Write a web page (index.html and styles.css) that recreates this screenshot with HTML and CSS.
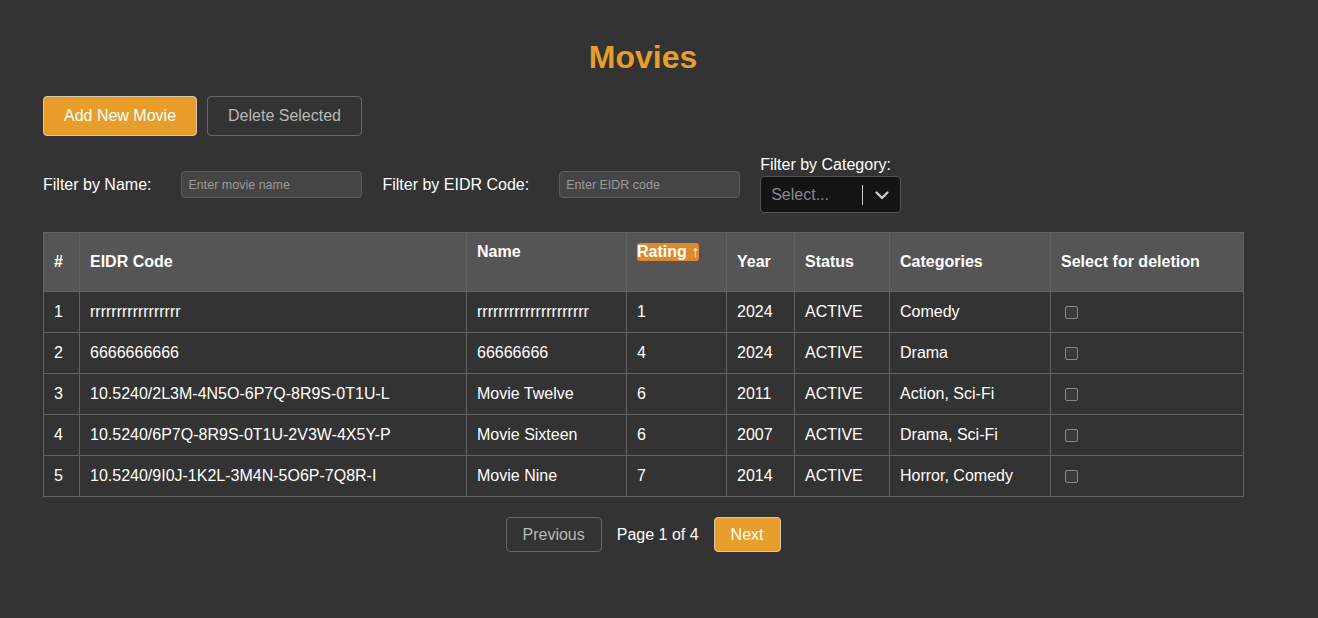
FILE: index.html
```html
<!DOCTYPE html>
<html lang="en">
<head>
<meta charset="utf-8">
<title>Movies</title>
<link rel="stylesheet" href="styles.css">
</head>
<body>
<div class="container">
  <h1 class="title">Movies</h1>
  <div class="actions">
    <button class="btn btn-primary">Add New Movie</button>
    <button class="btn btn-outline">Delete Selected</button>
  </div>
  <div class="filters">
    <label class="filter-label">Filter by Name:</label>
    <input class="filter-input" type="text" placeholder="Enter movie name">
    <label class="filter-label">Filter by EIDR Code:</label>
    <input class="filter-input" type="text" placeholder="Enter EIDR code">
    <div class="category-group">
      <label class="cat-label">Filter by Category:</label>
      <div class="select">
        <span class="select-placeholder">Select...</span>
        <span class="select-sep"></span>
        <svg class="select-chevron" width="20" height="20" viewBox="0 0 20 20"><path d="M4.5 7.5 L10 13 L15.5 7.5" fill="none" stroke="#cccccc" stroke-width="2.4" stroke-linecap="round" stroke-linejoin="round"/></svg>
      </div>
    </div>
  </div>
  <table class="movies">
    <colgroup>
      <col class="c1"><col class="c2"><col class="c3"><col class="c4"><col class="c5"><col class="c6"><col class="c7"><col class="c8">
    </colgroup>
    <thead>
      <tr>
        <th>#</th>
        <th>EIDR Code</th>
        <th class="top">Name</th>
        <th class="top"><span class="sort-badge">Rating ↑</span></th>
        <th>Year</th>
        <th>Status</th>
        <th>Categories</th>
        <th>Select for deletion</th>
      </tr>
    </thead>
    <tbody>
      <tr><td>1</td><td>rrrrrrrrrrrrrrrrr</td><td>rrrrrrrrrrrrrrrrrrrrr</td><td>1</td><td>2024</td><td>ACTIVE</td><td>Comedy</td><td><input class="chk" type="checkbox"></td></tr>
      <tr><td>2</td><td>6666666666</td><td>66666666</td><td>4</td><td>2024</td><td>ACTIVE</td><td>Drama</td><td><input class="chk" type="checkbox"></td></tr>
      <tr><td>3</td><td>10.5240/2L3M-4N5O-6P7Q-8R9S-0T1U-L</td><td>Movie Twelve</td><td>6</td><td>2011</td><td>ACTIVE</td><td>Action, Sci-Fi</td><td><input class="chk" type="checkbox"></td></tr>
      <tr><td>4</td><td>10.5240/6P7Q-8R9S-0T1U-2V3W-4X5Y-P</td><td>Movie Sixteen</td><td>6</td><td>2007</td><td>ACTIVE</td><td>Drama, Sci-Fi</td><td><input class="chk" type="checkbox"></td></tr>
      <tr><td>5</td><td>10.5240/9I0J-1K2L-3M4N-5O6P-7Q8R-I</td><td>Movie Nine</td><td>7</td><td>2014</td><td>ACTIVE</td><td>Horror, Comedy</td><td><input class="chk" type="checkbox"></td></tr>
    </tbody>
  </table>
  <div class="pagination">
    <button class="btn btn-outline btn-sm">Previous</button>
    <span class="page-info">Page 1 of 4</span>
    <button class="btn btn-primary btn-sm">Next</button>
  </div>
</div>
</body>
</html>
```
FILE: styles.css
```css
* { box-sizing: border-box; }
html, body {
  margin: 0;
  background: #333333;
  color: #ffffff;
  font-family: "Liberation Sans", Arial, sans-serif;
  font-size: 16px;
}
.container {
  width: 1200px;
  margin-left: 43px;
  padding-top: 39px;
}
.title {
  margin: 0;
  text-align: center;
  font-size: 32px;
  line-height: 37px;
  font-weight: bold;
  color: #e89e2c;
}
.actions {
  display: flex;
  gap: 10px;
  margin-top: 20px;
}
.btn {
  font-family: "Liberation Sans", Arial, sans-serif;
  font-size: 16px;
  height: 40px;
  padding: 0 20px;
  border-radius: 4px;
  cursor: pointer;
}
.btn-primary {
  background: #e89e2b;
  border: 1px solid #d8c7a8;
  color: #ffffff;
}
.btn-outline {
  background: transparent;
  border: 1px solid #666666;
  color: #b8b8b8;
}
.btn-sm {
  height: 35px;
  padding: 0 16px;
}
.filters {
  display: flex;
  align-items: center;
  margin-top: 20px;
}
.filter-label {
  margin-right: 30px;
}
.filter-input {
  width: 181px;
  height: 27px;
  background: #454545;
  border: 1px solid #5c5c5c;
  border-radius: 4px;
  color: #ffffff;
  font-family: "Liberation Sans", Arial, sans-serif;
  font-size: 12.5px;
  padding: 0 6px;
  margin-right: 20px;
}
.filter-input::placeholder { color: #9a9a9a; }
.category-group {
  display: flex;
  flex-direction: column;
  gap: 2px;
}
.cat-label {
  line-height: 18px;
}
.select {
  width: 141px;
  height: 37px;
  background: #141414;
  border: 1px solid #555555;
  border-radius: 4px;
  display: flex;
  align-items: center;
  padding-left: 10px;
}
.select-placeholder {
  color: #8a8a8a;
  flex: 1;
}
.select-sep {
  width: 1px;
  height: 20px;
  background: #cccccc;
}
.select-chevron {
  margin: 0 8px 0 9px;
}
.movies {
  margin-top: 19px;
  width: 1200px;
  border-collapse: collapse;
  table-layout: fixed;
}
.c1 { width: 36px; }
.c2 { width: 387px; }
.c3 { width: 160px; }
.c4 { width: 100px; }
.c5 { width: 68px; }
.c6 { width: 95px; }
.c7 { width: 161px; }
.c8 { width: 193px; }
.movies th, .movies td {
  border: 1px solid #616161;
  text-align: left;
  padding: 0 10px;
}
.movies th {
  background: #555555;
  height: 59px;
  font-weight: bold;
  vertical-align: middle;
}
.movies th.top {
  vertical-align: top;
  padding-top: 10px;
}
.movies td {
  height: 41px;
  vertical-align: middle;
}
.sort-badge {
  display: inline-block;
  background: #dd8a2e;
  border-radius: 3px;
  padding: 0;
  line-height: 18px;
}
.chk {
  appearance: none;
  -webkit-appearance: none;
  width: 13px;
  height: 13px;
  margin: 4px 0 0 4px;
  border: 1px solid #888888;
  border-radius: 2px;
  background: #3a3a3a;
}
.pagination {
  display: flex;
  justify-content: center;
  align-items: center;
  gap: 15px;
  margin-top: 20px;
}
.page-info { color: #ffffff; }
```
